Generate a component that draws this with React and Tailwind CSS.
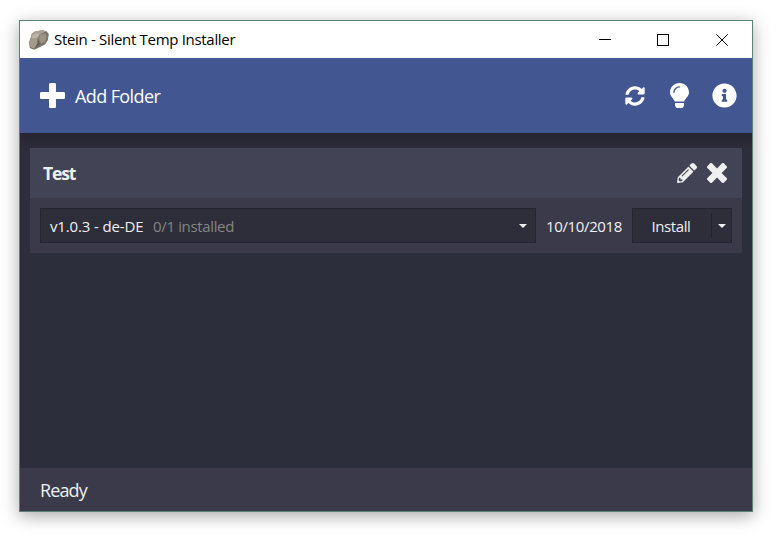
import { FaSyncAlt, FaPencilAlt, FaInfoCircle } from "react-icons/fa";

function StoneIcon() {
  return (
    <svg viewBox="0 0 20 20" className="h-5 w-5">
      <path d="M3 3.500 6 1.500 13 .2 17.500 1.200 19.800 4 19 10l-3 4.500-7 3.500-4 1.700L.8 18 0 12.500Z" fill="#7d7569" />
      <path d="M3 3.500 6 1.500 13 .2 17 1.200 11 4.500 8.500 9 1.500 9Z" fill="#aaa294" />
      <path d="M1.500 8.500 8 8l1 5-4 5.500L1.200 17 .3 12.500Z" fill="#a39a8b" />
      <path d="M11.500 4.500 16.500 3.500 17.500 7 16 11.500l-4 2-2-4.500Z" fill="#9c9385" />
      <path d="M3 5.500 8 3 10 4.500 7.500 8 3.500 8.500Z" fill="#bbb4a7" />
      <path d="M8.500 9 11 14l-5 4.500L8.500 13Z" fill="#665e53" />
    </svg>
  );
}

function PlusIcon() {
  return (
    <svg viewBox="0 32 448 448" className="h-[25px] w-[25px]" fill="currentColor">
      <path d="M448 294.200v-76.400c0-13.300-10.700-24-24-24H286.200V56c0-13.300-10.700-24-24-24h-76.400c-13.300 0-24 10.700-24 24v137.800H24c-13.300 0-24 10.700-24 24v76.400c0 13.300 10.700 24 24 24h137.800V456c0 13.300 10.700 24 24 24h76.400c13.300 0 24-10.700 24-24V318.200H424c13.300 0 24-10.700 24-24z" />
    </svg>
  );
}

function TimesIcon() {
  return (
    <svg viewBox="0 64 384 384" className="h-5 w-5" fill="currentColor">
      <path d="M323.100 441l53.900-53.900c9.400-9.400 9.400-24.500 0-33.900L279.800 256l97.200-97.200c9.400-9.400 9.400-24.500 0-33.900L323.100 71c-9.400-9.400-24.500-9.400-33.900 0L192 168.200 94.800 71c-9.400-9.400-24.500-9.400-33.900 0L7 124.900c-9.400 9.400-9.400 24.500 0 33.900l97.200 97.200L7 353.200c-9.400 9.400-9.400 24.500 0 33.900L60.900 441c9.400 9.400 24.500 9.400 33.900 0l97.200-97.200 97.200 97.200c9.300 9.300 24.500 9.300 33.900 0z" />
    </svg>
  );
}

function BulbIcon() {
  return (
    <svg viewBox="0 0 19 25" className="h-[25px] w-[19px]">
      <path d="M9.500 0C4.200 0 0 4.200 0 9.300c0 4.200 3.400 5.600 4.800 9.300h9.400C15.600 14.900 19 13.500 19 9.300 19 4.200 14.800 0 9.500 0Z" fill="currentColor" />
      <path d="M4 9.300C4 6.100 6.400 3.900 9.500 3.900" fill="none" stroke="#425692" strokeWidth="1.400" strokeLinecap="round" />
      <path d="M5 20h9v2.800L12.500 25h-6L5 22.800Z" fill="currentColor" />
    </svg>
  );
}

function Caret() {
  return (
    <svg viewBox="0 0 8 4" className="h-1 w-2" fill="#f0f0f0">
      <path d="M0 0h8L4 4Z" />
    </svg>
  );
}

function TitleBar() {
  return (
    <header className="flex h-[37px] shrink-0 items-center bg-white pl-[9px] text-black">
      <StoneIcon />
      <span className="ml-[5px] flex-1 text-[15px] tracking-[-0.31px]">Stein - Silent Temp Installer</span>
      <svg viewBox="0 0 129 12" className="mr-6 h-3 w-[129px]" fill="none" stroke="#000">
        <path d="M0 5.500h12M58.500.5h11v11h-11Z" shapeRendering="crispEdges" />
        <path d="m117.300.3 11.400 11.400M128.700.3l-11.400 11.400" />
      </svg>
    </header>
  );
}

export default function App() {
  return (
    <div className="h-[536px] w-[777px] overflow-hidden bg-white pt-5 pl-[19px] font-['Open_Sans','Noto_Sans',sans-serif]">
      <div className="flex h-[492px] w-[734px] flex-col border border-[#5d8376] bg-[#2d2e3b] text-[#f0f0f0] shadow-[0_4px_16px_rgba(0,0,0,0.34)]">
        <TitleBar />
        <div className="flex h-[75px] shrink-0 items-center bg-[#425692] pr-[15px] pl-5 text-white">
          <PlusIcon />
          <span className="ml-[10px] flex-1 pt-px text-[18px] tracking-[-0.6px]">Add Folder</span>
          <FaSyncAlt className="mr-[25px] h-5 w-5" />
          <BulbIcon />
          <FaInfoCircle className="ml-[23px] h-[25px] w-[25px]" />
        </div>
        <main className="flex-1 bg-linear-to-b from-[#262530] to-[#2d2e3b] to-[18px] px-[10px] pt-[15px]">
          <section className="h-[105px] bg-[#3a3a4b]">
            <div className="flex h-[50px] items-center bg-[#434356] pr-[15px] pl-[13px]">
              <span className="flex-1 pt-px text-[17.500px] font-bold tracking-[-1.1px]">Test</span>
              <FaPencilAlt className="mr-[10px] h-5 w-5" />
              <TimesIcon />
            </div>
            <div className="flex items-center p-[10px] text-[15px]">
              <div className="flex h-[35px] w-[496px] items-center border border-[#252531] bg-[#2e2d3a] pr-2 pl-[9px]">
                <span className="w-[103px] pt-0.5 whitespace-nowrap tracking-[-0.14px]">v1.0.3 - de-DE</span>
                <span className="flex-1 pt-0.5 tracking-[-0.35px] text-[#858585]">0/1 installed</span>
                <Caret />
              </div>
              <span className="w-24 pt-0.5 text-center tracking-[-0.35px]">10/10/2018</span>
              <div className="flex h-[35px] w-[100px] items-center border border-[#252531] bg-[#2e2d3a]">
                <span className="w-[78px] pt-0.5 pr-0.5 text-center tracking-[-0.4px]">Install</span>
                <div className="flex h-[25px] flex-1 items-center justify-center border-l border-[#22222d]">
                  <Caret />
                </div>
              </div>
            </div>
          </section>
        </main>
        <footer className="flex h-[43px] shrink-0 items-center bg-[#3a3a4b] pt-0.5 pl-5 text-[18px] tracking-[-0.9px]">Ready</footer>
      </div>
    </div>
  );
}
